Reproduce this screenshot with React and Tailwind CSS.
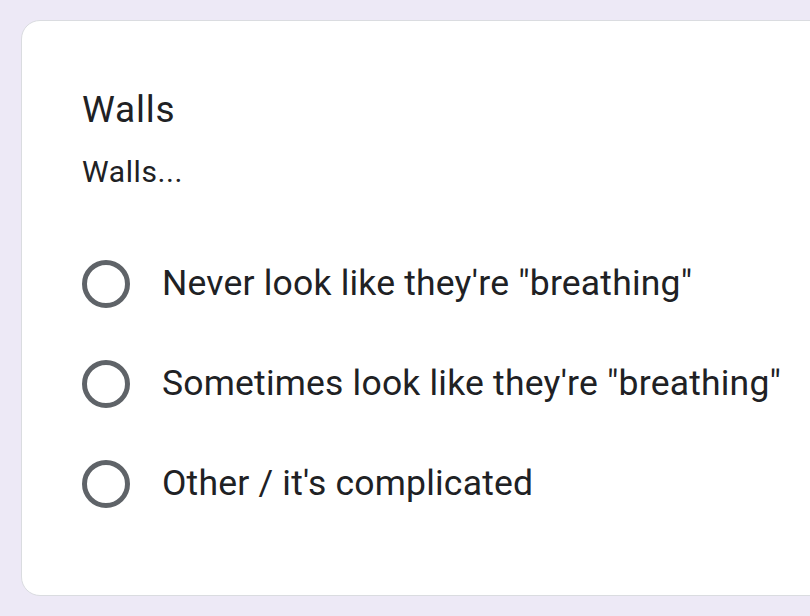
const options = [
  'Never look like they\'re "breathing"',
  'Sometimes look like they\'re "breathing"',
  "Other / it's complicated",
]

function Radio() {
  return <span className="block size-[48px] shrink-0 rounded-full border-[5px] border-[#5f6368]" />
}

export default function App() {
  return (
    <div className="h-[616px] w-[810px] overflow-hidden bg-[#ede9f6] pt-[20px] pl-[21px] font-['Roboto',sans-serif] text-[#202124]">
      <div className="w-[900px] rounded-[19px] border border-[#dadce0] bg-white pt-[70px] pb-[87px] pl-[60px]">
        <h1 className="text-[37px] leading-none tracking-[0.8px]">Walls</h1>
        <p className="mt-[29px] text-[30px] leading-none tracking-[0.6px]">Walls...</p>
        <div className="mt-[73px] flex flex-col gap-[52px]">
          {options.map((o) => (
            <label key={o} className="flex items-center gap-[32px]">
              <Radio />
              <span className="text-[35.5px] leading-none tracking-[0.2px]">{o}</span>
            </label>
          ))}
        </div>
      </div>
    </div>
  )
}
